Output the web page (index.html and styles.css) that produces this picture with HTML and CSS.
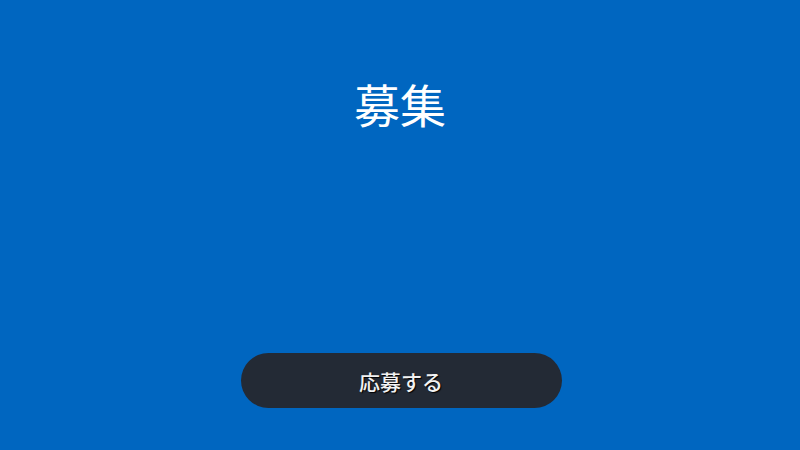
FILE: index.html
```html
<!DOCTYPE html>
<html lang="ja">
<head>
<meta charset="utf-8">
<link rel="stylesheet" href="styles.css">
</head>
<body>
<main class="screen">
  <h1 class="title">募集</h1>
  <button class="apply">応募する</button>
</main>
</body>
</html>
```
FILE: styles.css
```css
html, body {
  margin: 0;
  padding: 0;
  width: 800px;
  height: 450px;
  overflow: hidden;
}
body {
  background: #0066c0;
  font-family: "Noto Sans CJK JP", "Noto Sans", sans-serif;
}
.screen {
  height: 450px;
  display: flex;
  flex-direction: column;
  align-items: center;
  box-sizing: border-box;
  padding-top: 70px;
}
.title {
  margin: 0;
  color: #ffffff;
  font-size: 46px;
  font-weight: 400;
  line-height: 66px;
}
.apply {
  margin-top: auto;
  margin-bottom: 42px;
  width: 321px;
  height: 55px;
  border: none;
  border-radius: 28px;
  background: #232a35;
  color: #f2f2f2;
  font-family: "Noto Sans CJK JP", sans-serif;
  font-size: 21px;
  font-weight: 500;
  text-shadow: 1px 1px 1px #000;
  padding: 0;
  margin-left: 2px;
}
```
